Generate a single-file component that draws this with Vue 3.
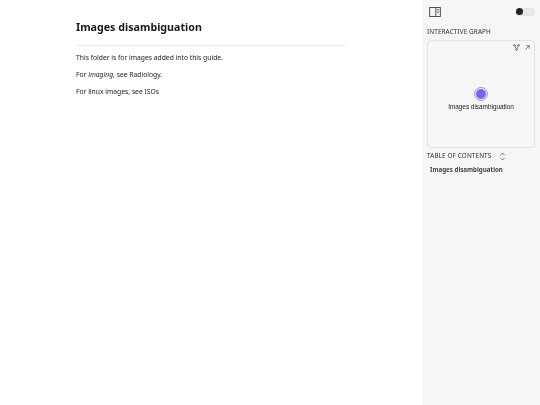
<template>
  <div class="page">
    <main class="content">
      <h1>Images disambiguation</h1>
      <hr />
      <p>This folder is for images added into this guide.</p>
      <p>For <em>imaging</em>, see Radiology.</p>
      <p>For linux images, see ISOs</p>
    </main>

    <aside class="sidebar">
      <div class="top-row">
        <svg class="panel-icon" viewBox="0 0 14 12">
          <rect x="0.6" y="0.6" width="12.8" height="10.8" fill="none" stroke="currentColor" stroke-width="1.1"/>
          <line x1="8" y1="0.6" x2="8" y2="11.4" stroke="currentColor" stroke-width="1.1"/>
          <path d="M9.5 3 H12 M9.5 5 H12 M9.5 7 H12" fill="none" stroke="currentColor" stroke-width="0.8"/>
        </svg>
        <div class="toggle">
          <span class="knob"></span>
          <svg class="moon" viewBox="0 0 8 8">
            <path d="M5 1 A3 3 0 1 0 7 5 A2.6 2.6 0 0 1 5 1 Z" fill="none" stroke="currentColor" stroke-width="0.8"/>
          </svg>
        </div>
      </div>

      <div class="label graph-label">INTERACTIVE GRAPH</div>
      <div class="graph">
        <div class="graph-tools">
          <svg class="tool" viewBox="0 0 10 10">
            <circle cx="2" cy="2" r="1.3" fill="none" stroke="currentColor" stroke-width="1.1"/>
            <circle cx="8" cy="2" r="1.3" fill="none" stroke="currentColor" stroke-width="1.1"/>
            <circle cx="5" cy="8" r="1.3" fill="none" stroke="currentColor" stroke-width="1.1"/>
            <path d="M2.6 3.2 L4.5 6.8 M7.4 3.2 L5.5 6.8" fill="none" stroke="currentColor" stroke-width="1.1"/>
          </svg>
          <svg class="arrow" viewBox="0 0 10 10">
            <path d="M1.5 8.5 L8.5 1.5 M2.5 1.5 H8.5 V7.5" fill="none" stroke="currentColor" stroke-width="1.5"/>
          </svg>
        </div>
        <div class="node-wrap">
          <span class="node"></span>
          <span class="node-label">Images disambiguation</span>
        </div>
      </div>

      <div class="label toc-label">
        TABLE OF CONTENTS
        <svg class="sort" viewBox="0 0 8 10">
          <path d="M1.5 3.5 L4 1 L6.5 3.5 M1.5 6.5 L4 9 L6.5 6.5" fill="none" stroke="currentColor" stroke-width="0.9"/>
        </svg>
      </div>
      <div class="toc-item">Images disambiguation</div>
    </aside>
  </div>
</template>

<script setup>
</script>

<style>
html, body {
  margin: 0;
  background: #fff;
}
</style>

<style scoped>
.page {
  display: flex;
  height: 405px;
  font-family: "Noto Sans", sans-serif;
  color: #2e2e2e;
  will-change: transform;
}

.content {
  flex: 1;
  padding: 18px 76px 0 76px;
}

h1 {
  margin: 0;
  font-size: 10.7px;
  line-height: 18px;
  font-weight: 700;
  color: #1a1a1a;
}

hr {
  border: 0;
  border-top: 1px solid #ececec;
  margin: 9px 0 7px;
}

p {
  margin: 0 0 7px;
  font-size: 6.75px;
  line-height: 10px;
  color: #222;
}

.sidebar {
  width: 118px;
  background: #f6f6f6;
  padding: 0 5px;
  box-sizing: border-box;
}

.top-row {
  display: flex;
  justify-content: space-between;
  align-items: center;
  height: 23px;
}

.panel-icon {
  width: 12px;
  height: 10px;
  margin-left: 2px;
  color: #444;
}

.toggle {
  width: 20px;
  height: 8px;
  border-radius: 4px;
  background: #e6e6e6;
  display: flex;
  align-items: center;
  justify-content: space-between;
}

.knob {
  width: 7px;
  height: 7px;
  border-radius: 50%;
  background: #222;
  margin-left: 1px;
}

.moon {
  width: 6px;
  height: 6px;
  margin-right: 2px;
  color: #f8f8f8;
}

.label {
  font-size: 6.4px;
  line-height: 10px;
  letter-spacing: 0.1px;
  color: #2e2e2e;
}

.graph-label {
  margin-top: 4px;
}

.graph {
  position: relative;
  height: 108px;
  margin-top: 3px;
  border: 1px solid #e2e2e2;
  border-radius: 4px;
  box-sizing: border-box;
}

.graph-tools {
  position: absolute;
  top: 3px;
  right: 4px;
  display: flex;
  align-items: center;
  gap: 5px;
  color: #555;
}

.tool {
  width: 7px;
  height: 7px;
}

.arrow {
  width: 5px;
  height: 5px;
}

.node-wrap {
  display: flex;
  flex-direction: column;
  align-items: center;
  padding-top: 47px;
}

.node {
  width: 10px;
  height: 10px;
  border-radius: 50%;
  background: #8361ee;
  border: 1px solid #f6f6f6;
  outline: 1px solid #a58df0;
}

.node-label {
  margin-top: 3px;
  font-family: "Liberation Sans", sans-serif;
  font-size: 6.4px;
  line-height: 8px;
  color: #222;
}

.toc-label {
  display: flex;
  align-items: center;
  gap: 8px;
  margin-top: 3px;
}

.sort {
  width: 7px;
  height: 9px;
  color: #555;
}

.toc-item {
  margin: 4px 0 0 3px;
  font-size: 6.2px;
  line-height: 10px;
  font-weight: 700;
  color: #444;
}
</style>
